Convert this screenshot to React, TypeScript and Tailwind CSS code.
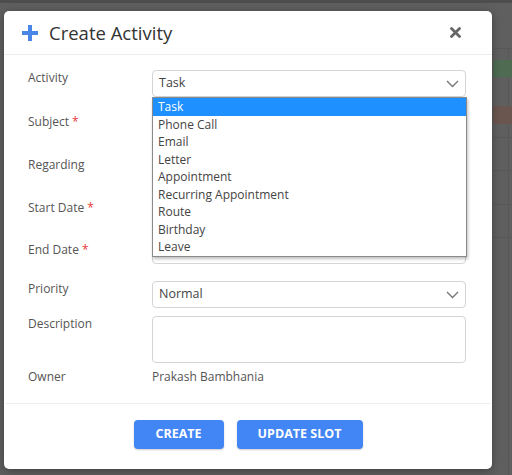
import React from 'react'

const activityTypes = [
  'Task',
  'Phone Call',
  'Email',
  'Letter',
  'Appointment',
  'Recurring Appointment',
  'Route',
  'Birthday',
  'Leave',
]

const Chevron = () => (
  <svg width="13" height="8" viewBox="0 0 13 8" className="shrink-0">
    <path d="M1 1 L6.5 6.5 L12 1" fill="none" stroke="#777" strokeWidth="1.4" />
  </svg>
)

const Required = () => <span className="text-[#e53935] ml-[3px]">*</span>

const Row = ({
  label,
  required,
  className,
  labelClass,
  children,
}: {
  label: string
  required?: boolean
  className?: string
  labelClass?: string
  children?: React.ReactNode
}) => (
  <div className={`flex items-start ${className ?? ''}`}>
    <div className={`w-[124px] shrink-0 text-[12px] leading-[18px] text-[#555] ${labelClass ?? ''}`}>
      {label}
      {required && <Required />}
    </div>
    <div className="w-[314px]">{children}</div>
  </div>
)

const boxClass =
  'w-full h-[27px] border border-[#d4d4d4] rounded-[4px] bg-white flex items-center justify-between px-[6px] text-[12.5px] text-[#444]'

export default function App() {
  return (
    <div
      className="relative w-[512px] h-[475px] overflow-hidden bg-[#5f5f5f]"
      style={{ fontFamily: '"Open Sans", "Noto Sans", sans-serif' }}
    >
      {/* page behind the overlay */}
      <div className="absolute inset-x-0 top-0 h-[3px] bg-[#4d4d4d]" />
      <div className="absolute right-[3px] top-[48px] bottom-0 w-px bg-[#575757]" />
      <div className="absolute right-0 left-[493px] top-[48px] h-px bg-[#585858]" />
      <div className="absolute left-[493px] right-0 top-[60px] h-[17px] bg-[#4f6b52]" />
      <div className="absolute left-[493px] right-0 top-[106px] h-[18px] bg-[#6a564f]" />
      <div className="absolute left-[493px] right-0 top-[137px] h-px bg-[#585858]" />
      <div className="absolute left-[493px] right-0 top-[170px] h-px bg-[#585858]" />
      <div className="absolute left-[493px] right-0 top-[204px] h-px bg-[#585858]" />
      <div className="absolute left-[493px] right-0 top-[237px] h-px bg-[#585858]" />

      {/* modal */}
      <div className="absolute left-[4px] top-[11px] w-[488px] h-[458px] bg-white rounded-[5px] shadow-[0_2px_8px_rgba(0,0,0,0.35)] flex flex-col">
        <div className="h-[44px] border-b border-[#ececec] flex items-center pl-[18px] pr-[31px]">
          <svg width="16" height="16" viewBox="0 0 16 16" className="shrink-0">
            <rect x="6" y="0" width="4" height="16" fill="#4a86e8" />
            <rect x="0" y="6" width="16" height="4" fill="#4a86e8" />
          </svg>
          <span className="ml-[11px] text-[18.5px] leading-[24px] text-[#333]">Create Activity</span>
          <svg width="11" height="11" viewBox="0 0 11 11" className="ml-auto">
            <path d="M1.5 1.5 L9.5 9.5 M9.5 1.5 L1.5 9.5" stroke="#666" strokeWidth="2.8" strokeLinecap="round" />
          </svg>
        </div>

        <div className="relative px-[24px] pt-[15px] flex-1">
          <Row label="Activity" labelClass="mt-[-1px]">
            <div className={boxClass}>
              <span>Task</span>
              <Chevron />
            </div>
          </Row>
          <Row label="Subject" required className="mt-[16px]">
            <div className={boxClass} />
          </Row>
          <Row label="Regarding" className="mt-[16px]">
            <div className={boxClass} />
          </Row>
          <Row label="Start Date" required className="mt-[16px]">
            <div className={boxClass} />
          </Row>
          <Row label="End Date" required className="mt-[11px]" labelClass="pt-[4px]">
            <div className={boxClass}>
              <span className="text-[#222]">11/10/2023 09:00 PM</span>
              <span className="w-[11px] h-[3px] border border-[#888] mt-[6px]" />
            </div>
          </Row>
          <Row label="Priority" className="mt-[17px]" labelClass="mt-[-1px]">
            <div className={`${boxClass} h-[26px]`}>
              <span>Normal</span>
              <Chevron />
            </div>
          </Row>
          <Row label="Description" className="mt-[8px]" labelClass="mt-[-1px]">
            <div className="w-full h-[47px] border border-[#d4d4d4] rounded-[4px]" />
          </Row>
          <Row label="Owner" className="mt-[5px]">
            <div className="text-[12px] leading-[18px] text-[#555]">Prakash Bambhania</div>
          </Row>

          {/* open select list */}
          <div className="absolute left-[148px] top-[42px] w-[315px] bg-white border border-[#8a8a8a] shadow-[1px_2px_3px_rgba(0,0,0,0.25)]">
            {activityTypes.map((t, i) => (
              <div
                key={t}
                className={`h-[17.5px] leading-[17.5px] pl-[5px] text-[12px] ${
                  i === 0 ? 'bg-[#1e90ff] text-white' : 'text-[#444]'
                }`}
              >
                {t}
              </div>
            ))}
          </div>
        </div>

        <div className="mx-[2px] border-t border-[#ececec] h-[66px] flex items-start justify-center gap-[13px] pt-[16px]">
          <button className="w-[90px] h-[29px] rounded-[4px] bg-[#4285f4] text-white text-[12.5px] font-bold shadow-[0_1px_2px_rgba(0,0,0,0.2)]">
            CREATE
          </button>
          <button className="w-[126px] h-[29px] rounded-[4px] bg-[#4285f4] text-white text-[12.5px] font-bold shadow-[0_1px_2px_rgba(0,0,0,0.2)]">
            UPDATE SLOT
          </button>
        </div>
      </div>
    </div>
  )
}
